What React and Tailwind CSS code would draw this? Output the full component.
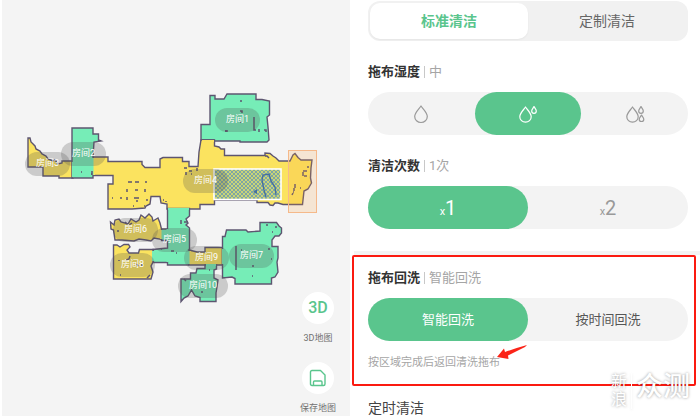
import { useState } from 'react';

const GREEN = '#76edb7';
const YELLOW = '#fbe35f';

const rooms = [
  { id: 3, fill: YELLOW, d: 'M28 138L30 138L31 142L35 146L36 149L40 151L42 154L46 156L48 159L53 161L55 160L58 164L62 163V161H73V178H59V176H43V167H28Z' },
  { id: 1, fill: GREEN, d: 'M201 140V124.5H210V95.5H215V99H224L227 94H256V99.5H262L269.5 101V115L267 117L268 127L269 140L267 142H240V141H214V140Z' },
  { id: 4, fill: YELLOW, d: 'M93 157H108V161.5H142V164.5L145 167.5H160V159L163 157.5H182.5V161.5H189V166.5H198L199 152L201 140H214.5V146L219 147L221 149H224.5V155.5H265V153L270 153.5L273 156L276 158L279 161H290L292 157L293 155L295 153.5L298 157.5L301 160H312L311 168L310.5 178L311.5 183L308 189L304 191L302.5 204.5H283L278 203L275 203L273 205.5L270 205L268 202.5H257V200H214.5V204.5H200V209H167V204L161 203L160 196.5H151L150 204L146 206L145 208L132 209H108V184H113V175.5H93Z' },
  { id: 2, fill: GREEN, d: 'M72 178V128H93V134H98.5V140L101 141L94 142L93 157V178Z' },
  { id: 5, fill: GREEN, d: 'M167.5 208.5H189.5V216L186 219L188 223L186 225L189.5 228V249.5L188.5 265H167.5V262.5H153V249.5L167.5 248V240.5H161.5V229H167.5Z' },
  { id: 6, fill: YELLOW, d: 'M110.5 222L114 225L115 220L119 219L121 222L128 224L131 219L136 222L139 220L141 215L145 218L149 214L152 217L153 221L158 218L160 223L161.5 229V239.5L154 238L151 241L146 240L139 239L134 241L122 240L115 240L113.5 230L111 229Z' },
  { id: 8, fill: YELLOW, d: 'M113.5 245H117L120 247L124 244.5H128.5L130 247L127 250L129 253H138.5L139.5 249.5H153V262L151 266L153 272L151 279H113.5Z' },
  { id: 9, fill: YELLOW, d: 'M189 250L197 252H205V247.5H222.5V265H189Z' },
  { id: 7, fill: GREEN, d: 'M222.5 278V236.5H225L226.5 230H246L248 232L260 231V222.5H276.5L279 226L281.5 228V233L279 236L275 236L272 240V246.5H278V258L277 262L278 272L275 277L271.5 278V284H235V278.5L232 277Z' },
  { id: 10, fill: GREEN, d: 'M205 265H216.5V269L214 270V278L218 280L217 287L216 293V301.5H200V297.5L195 296L191.5 290L188 296L184 298L181 301.5V279H190.5V273H196L197 268.5H205Z' },
];

const labels = [
  { id: 1, className: 'left-[195px] top-[23px]' },
  { id: 2, className: 'left-[41px] top-[57px]' },
  { id: 3, className: 'left-[5px] top-[67px]' },
  { id: 4, className: 'left-[163px] top-[84px]' },
  { id: 5, className: 'left-[132px] top-[143px]' },
  { id: 6, className: 'left-[93px] top-[133px]' },
  { id: 7, className: 'left-[209px] top-[159px]' },
  { id: 8, className: 'left-[90px] top-[168px]' },
  { id: 9, className: 'left-[164px] top-[161px]' },
  { id: 10, className: 'left-[158px] top-[189px]' },
];

// obstacles picked up by the lidar
const OBSTACLES =
  'M240 101h2M240 111h2v2M240 122h1M225 131h3M226 130v2M254 117v13h2M259 129v3M264 130h2v2M81 172h1M92 171v4M91 174h1' +
  'M128 182h4M135 182h4M146 181v2M127 189v3M135 190h3M145 189v3M127 197v3M134 198h5M137 200v2M147 199v2M112 198h1M120 198h2M144 206h1M133 206h1M163 200h1M166 201v1' +
  'M184 168h3M186 172v3M189 171h3M197 168v3M191 174h1M303 171h4M303 172v4M304 176h3M295 184v4M294 188v3M293 192h1M293 193l-1 2M300 188h1M308 166v2' +
  'M181 220v4M184 222h4M171 251h3M176 253h1M161 249h1M236 246v24M241 250h1M252 256v1M253 265v2M252 276h1M269 248v2M267 224v2M272 232h1M276 226v2M271 259h1' +
  'M130 256l-1 3l-3 1M136 264l3 2M141 265h2M120 275h1M119 260v1M147 278l3-3M117 231h2M125 222l2 2M129 225l3-2M202 291v2M184 279l2 2M209 270h1M265 156h2l2 2';

const CleaningMap = () => (
  <div className="relative ml-[18px] w-[300px] shrink-0">
    <svg viewBox="20 85 300 225" className="block w-full" role="img" aria-label="清洁地图">
      <defs>
        <pattern id="hatch" width="4" height="4" patternUnits="userSpaceOnUse">
          <path d="M0 0L4 4M4 0L0 4" stroke="#6b9bb0" strokeWidth="0.8" />
        </pattern>
      </defs>
      {rooms.map((room) => (
        <path key={room.id} d={room.d} fill={room.fill} stroke="#5d5570" strokeWidth="1.4" />
      ))}
      {/* doorways between rooms have no wall */}
      <path d="M202 141H214M94 158V175M190 251V264M161 230V239" stroke={YELLOW} strokeWidth="2" />
      <path d="M73 162V177M92.5 158V175M168 209H189M153 251V261M162.5 230V239M167.5 229V240M167.5 249V262M188.5 251V264M206 265H216M223 249V264" stroke={GREEN} strokeWidth="2" />
      <path d={OBSTACLES} fill="none" stroke="#5d5570" strokeWidth="1.5" />
      <rect x="214" y="169" width="67" height="30.5" fill="#c9d477" />
      <rect x="214" y="169" width="67" height="30.5" fill="url(#hatch)" stroke="#fff" strokeWidth="1.6" />
      <path d="M266 197L264 190L262 180L263 175L269 174L271 181L275 187L276 195" fill="none" stroke="#4470a0" strokeWidth="1.4" />
      <path d="M253 192L257 189V194Z" fill="#4470a0" />
      <rect x="288.5" y="150.5" width="28" height="62" fill="#f9a03f" fillOpacity="0.18" stroke="#f5b98a" />
    </svg>
    {labels.map(({ id, className }) => (
      <button
        key={id}
        type="button"
        className={`absolute flex h-6 items-center justify-center rounded-full bg-[#505050]/25 text-[9px] text-white ${id === 10 ? 'w-[50px]' : 'w-[45px]'} ${className}`}
      >
        房间{id}
      </button>
    ))}
  </div>
);

const SaveIcon = () => (
  <svg width="18" height="18" viewBox="0 0 18 18" fill="none" stroke="#5ac58d" strokeWidth="1.4" strokeLinejoin="round">
    <path d="M3 1.5H11.5L16 6V15Q16 16.5 14.5 16.5H3Q1.5 16.5 1.5 15V3Q1.5 1.5 3 1.5Z" />
    <path d="M4.5 16.5V13Q4.5 12 5.5 12H12Q13 12 13 13V16.5" />
  </svg>
);

const MapAction = ({ label, children }) => (
  <button type="button" className="flex w-12 flex-col items-center gap-2">
    <span className="flex size-8 items-center justify-center rounded-full bg-white text-base font-medium text-[#5ac58d]">
      {children}
    </span>
    <span className="text-[9px] leading-3 text-[#707070]">{label}</span>
  </button>
);

const DropIcon = ({ level }) => (
  <svg width="20" height="20" viewBox="0 0 20 20" fill="none" stroke="currentColor" strokeWidth="1.2" strokeLinejoin="round">
    {level === 1 && <path d="M10 2C8.5 4.5 3.7 8.5 3.7 12.5A6.3 6 0 0 0 16.3 12.5C16.3 8.5 11.5 4.5 10 2Z" />}
    {level > 1 && <path d="M7.5 3C6 5.5 1.8 9 1.8 12.7A5.7 5.5 0 0 0 13.2 12.7C13.2 9 9 5.5 7.5 3Z" />}
    {level > 1 && <path d="M16 2.5C15.3 4 13.7 5.3 13.7 7A2.3 2.3 0 0 0 18.3 7C18.3 5.3 16.7 4 16 2.5Z" />}
    {level > 2 && <path d="M16.5 11C15.8 12.5 14.2 13.5 14.2 15.2A2.3 2.3 0 0 0 18.8 15.2C18.8 13.5 17.2 12.5 16.5 11Z" />}
  </svg>
);

const Times = ({ n }) => (
  <span className="text-xl">
    <span className="text-[11px]">x</span>
    {n}
  </span>
);

const Heading = ({ title, value }) => (
  <h2 className="flex items-center gap-1 text-[13px] leading-5 text-[#a5a5a5]">
    <span className="font-bold text-[#333]">{title}</span>
    <span className="h-3 w-px bg-[#c8c8c8]" />
    <span>{value}</span>
  </h2>
);

const Segmented = ({ name, options, value, onChange, idle = 'text-[#999]' }) => (
  <div role="group" aria-label={name} className="mt-[10px] flex h-[43px] rounded-full bg-[#f3f3f3] text-[13px]">
    {options.map((opt) => (
      <button
        key={opt.id}
        type="button"
        aria-label={opt.name}
        aria-pressed={value === opt.id}
        onClick={() => onChange(opt.id)}
        className={`flex flex-1 items-center justify-center rounded-full ${value === opt.id ? 'bg-[#5ac58d] text-white' : idle}`}
      >
        {opt.content}
      </button>
    ))}
  </div>
);

const App = () => {
  const [mode, setMode] = useState('标准清洁');
  const [wet, setWet] = useState(2);
  const [times, setTimes] = useState(1);
  const [wash, setWash] = useState('智能回洗');

  return (
    <div className="flex min-h-screen bg-white font-['Roboto','Noto_Sans_CJK_SC',sans-serif]">
      <section className="relative w-1/2 border-l-2 border-white bg-[#f4f4f4] pt-[85px]">
        <CleaningMap />
        <div className="absolute right-2 bottom-[2px] flex flex-col gap-[18px]">
          <MapAction label="3D地图">3D</MapAction>
          <MapAction label="保存地图">
            <SaveIcon />
          </MapAction>
        </div>
      </section>

      <main className="relative w-1/2 pt-px">
        <div className="pr-3 pl-[18px]">
          <div role="tablist" className="flex h-10 rounded-xl bg-[#f1f1f1] p-[2px] text-sm">
            {['标准清洁', '定制清洁'].map((tab) => (
              <button
                key={tab}
                type="button"
                role="tab"
                aria-selected={mode === tab}
                onClick={() => setMode(tab)}
                className={`flex-1 rounded-[10px] ${mode === tab ? 'bg-white font-bold text-[#5ac58d] shadow-xs' : 'text-[#666]'}`}
              >
                {tab}
              </button>
            ))}
          </div>

          <div className="mt-[21px]">
            <Heading title="拖布湿度" value="中" />
            <Segmented
              name="拖布湿度"
              value={wet}
              onChange={setWet}
              options={[
                { id: 1, name: '低', content: <DropIcon level={1} /> },
                { id: 2, name: '中', content: <DropIcon level={2} /> },
                { id: 3, name: '高', content: <DropIcon level={3} /> },
              ]}
            />
          </div>

          <div className="mt-[21px]">
            <Heading title="清洁次数" value="1次" />
            <Segmented
              name="清洁次数"
              value={times}
              onChange={setTimes}
              options={[
                { id: 1, content: <Times n={1} /> },
                { id: 2, content: <Times n={2} /> },
              ]}
            />
          </div>
        </div>

        <div className="mt-[22px] ml-1 h-1 bg-[#f3f3f3]" />

        <section className="mr-1 ml-[2px] rounded-xs border-2 border-[#fb1a10] pt-[11px] pr-[6px] pb-[11px] pl-[14px]">
          <Heading title="拖布回洗" value="智能回洗" />
          <Segmented
            name="拖布回洗"
            value={wash}
            onChange={setWash}
            idle="text-[#555]"
            options={[
              { id: '智能回洗', content: '智能回洗' },
              { id: '按时间回洗', content: '按时间回洗' },
            ]}
          />
          <p className="relative mt-3 w-fit text-[11px] leading-5 text-[#a5a5a5]">
            按区域完成后返回清洗拖布
            <svg width="31" height="15" viewBox="0 0 31 15" className="absolute -top-2 left-full -ml-1">
              <path d="M1 12L8 3.5L9 7Q20 3 31 0L29 2L12 10.5L12.5 14Z" fill="#fb2418" />
            </svg>
          </p>
        </section>

        <h2 className="mt-[14px] pl-[18px] text-sm leading-4 text-[#444]">定时清洁</h2>

        {/* watermark */}
        <div className="absolute right-[10px] bottom-[7px] flex items-center gap-1 text-white [text-shadow:0_0_3px_rgb(0_0_0/0.4)]">
          <span className="w-4 text-base leading-[18px]">新浪</span>
          <span className="h-9 w-px bg-white shadow-sm" />
          <span className="pb-2 text-[27px] leading-7 font-medium">众测</span>
        </div>
      </main>
    </div>
  );
};

export default App;
